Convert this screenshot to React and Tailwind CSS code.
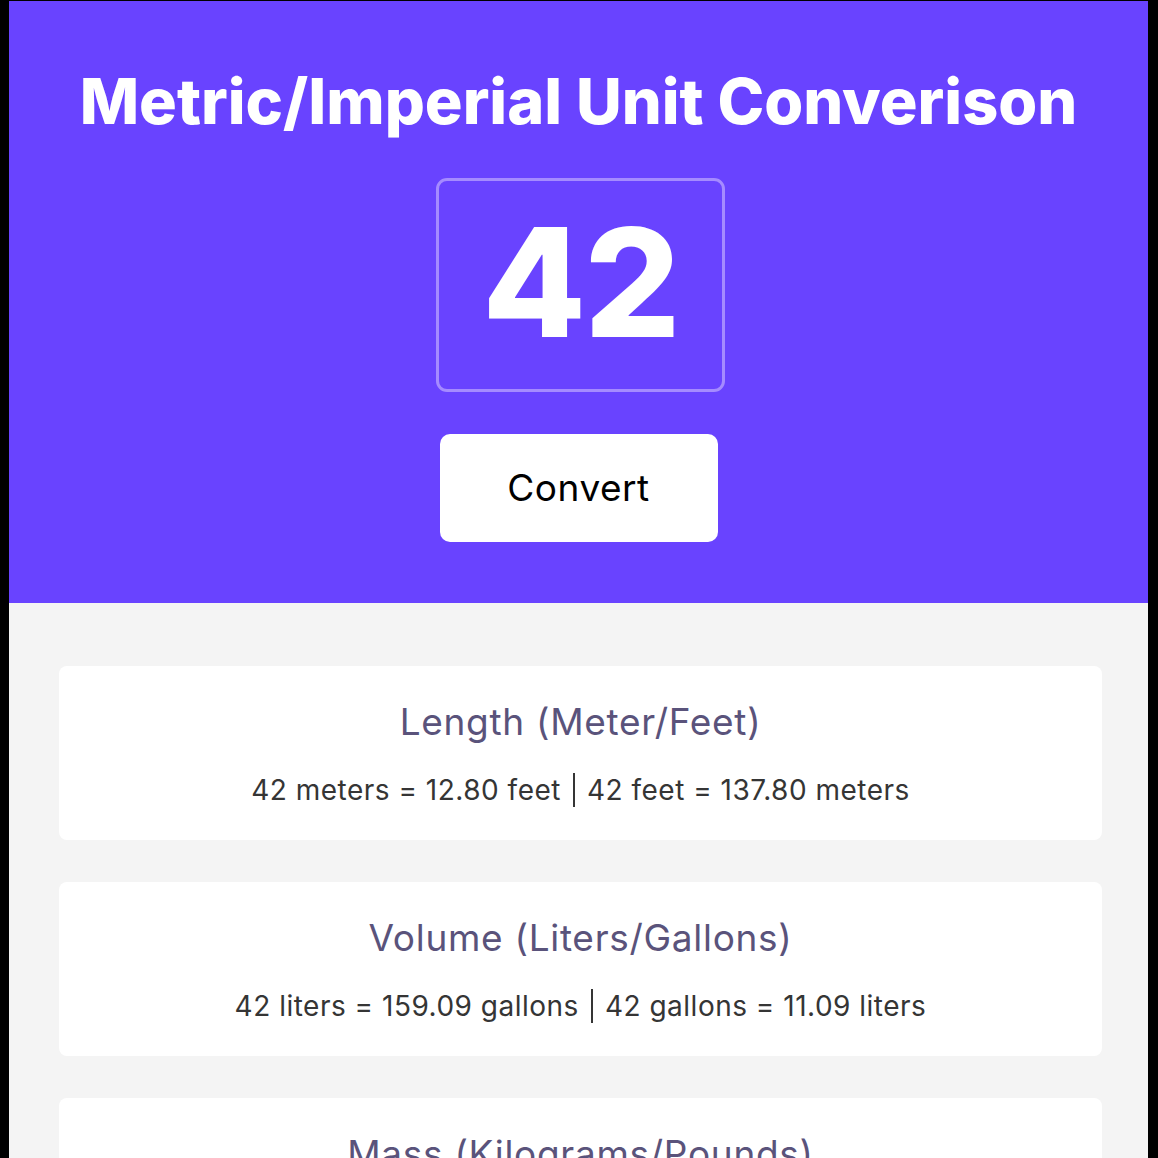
export default function App() {
  const cards = [
    {
      title: "Length (Meter/Feet)",
      body: ["42 meters = 12.80 feet", "42 feet = 137.80 meters"],
    },
    {
      title: "Volume (Liters/Gallons)",
      body: ["42 liters = 159.09 gallons", "42 gallons = 11.09 liters"],
    },
    {
      title: "Mass (Kilograms/Pounds)",
      body: ["42 kilos = 92.59 pounds", "42 pounds = 19.05 kilos"],
    },
  ];
  return (
    <div className="bg-black pt-[1px] pl-[9px] pr-[10px] h-[1158px] overflow-hidden font-['Inter',sans-serif]">
      <div className="bg-[#F4F4F4] min-h-[1157px]">
        <header className="bg-[#6943FF] h-[602px] flex flex-col items-center">
          <h1 className="mt-[62px] text-white font-extrabold text-[63px] leading-[76px] tracking-[0px]">
            Metric/Imperial Unit Converison
          </h1>
          <div className="mt-[39px] ml-[4px] w-[289px] h-[214px] border-[3px] border-[#A58BFF] rounded-[11px] flex items-center justify-center">
            <span className="text-white font-extrabold text-[151px] leading-none tracking-[-2px] mt-[-6px]">
              42
            </span>
          </div>
          <button className="mt-[42px] w-[278px] h-[108px] bg-white rounded-[10px] text-black text-[37px] tracking-[0.5px]">
            Convert
          </button>
        </header>
        <main className="pl-[50px] pr-[46px] pt-[63px] flex flex-col gap-[42px]">
          {cards.map((c) => (
            <section
              key={c.title}
              className="bg-white rounded-[8px] h-[174px] flex flex-col items-center pt-[34px]"
            >
              <h2 className="text-[#5A537B] text-[37px] leading-[44px] font-normal tracking-[0.7px]">
                {c.title}
              </h2>
              <p className="mt-[29px] text-[#353535] text-[28px] leading-[34px] tracking-[0.5px] flex items-center">
                <span>{c.body[0]}</span>
                <span className="inline-block w-[2px] h-[34px] bg-[#353535] mx-[12px]" />
                <span>{c.body[1]}</span>
              </p>
            </section>
          ))}
        </main>
      </div>
    </div>
  );
}
